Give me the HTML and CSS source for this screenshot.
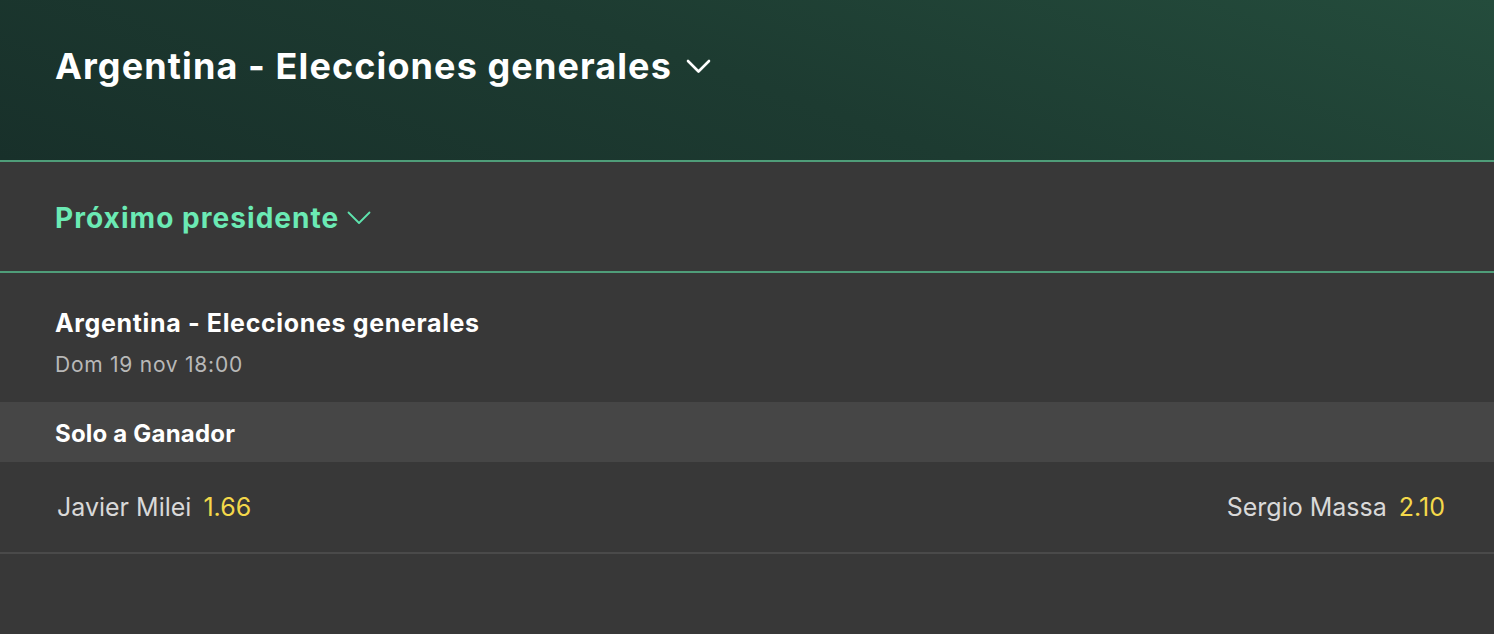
FILE: index.html
```html
<!DOCTYPE html>
<html lang="es">
<head>
<meta charset="utf-8">
<title>Argentina - Elecciones generales</title>
<link rel="stylesheet" href="styles.css">
</head>
<body>
<header class="hero">
  <h1 class="hero-title">Argentina - Elecciones generales
    <svg class="chev" width="25" height="15" viewBox="0 0 25 15"><path d="M2 2 L12.5 12.5 L23 2" fill="none" stroke="#fff" stroke-width="2.6" stroke-linecap="round" stroke-linejoin="round"/></svg>
  </h1>
</header>
<section class="subhead">
  <h2 class="sub-title">Próximo presidente
    <svg class="chev" width="24" height="14" viewBox="0 0 24 14"><path d="M1.5 1.5 L12 12 L22.5 1.5" fill="none" stroke="#5ee3ad" stroke-width="1.8" stroke-linecap="round" stroke-linejoin="round"/></svg>
  </h2>
</section>
<section class="event">
  <div class="event-title">Argentina - Elecciones generales</div>
  <div class="event-date">Dom 19 nov 18:00</div>
</section>
<div class="market">Solo a Ganador</div>
<div class="odds-row">
  <div class="pick"><span class="name">Javier Milei</span><span class="price">1.66</span></div>
  <div class="pick"><span class="name">Sergio Massa</span><span class="price">2.10</span></div>
</div>
</body>
</html>
```

FILE: styles.css
```css
html, body {
  margin: 0;
  padding: 0;
  background: #383838;
  font-family: Inter, "Noto Sans", "Liberation Sans", sans-serif;
  color: #fff;
}
.hero {
  height: 162px;
  box-sizing: border-box;
  background: linear-gradient(200deg, #244c3c 0%, #1d3b31 50%, #18302a 100%);
  border-bottom: 2px solid #4f9d79;
  display: flex;
  align-items: flex-start;
  padding: 44px 0 0 55px;
}
.hero-title {
  margin: 0;
  font-size: 36px;
  font-weight: 700;
  letter-spacing: 1.1px;
  display: flex;
  align-items: center;
  gap: 14px;
  line-height: 44px;
}
.chev { display: block; }
.subhead {
  height: 111px;
  box-sizing: border-box;
  border-bottom: 2px solid #4f9d79;
  padding: 2px 0 0 55px;
  display: flex;
  align-items: center;
}
.sub-title {
  margin: 0;
  font-size: 28px;
  font-weight: 700;
  letter-spacing: 1.05px;
  color: #6beab4;
  display: flex;
  align-items: center;
  gap: 8px;
  line-height: 34px;
}
.event {
  height: 129px;
  box-sizing: border-box;
  padding: 35px 0 0 55px;
}
.event-title {
  font-size: 25px;
  font-weight: 700;
  letter-spacing: 0.65px;
  line-height: 30px;
}
.event-date {
  margin-top: 15px;
  font-size: 21px;
  letter-spacing: 0.75px;
  color: #b8b8b8;
  line-height: 24px;
}
.market {
  height: 60px;
  box-sizing: border-box;
  background: #464646;
  padding: 3px 0 0 55px;
  display: flex;
  align-items: center;
  font-size: 24px;
  font-weight: 700;
  letter-spacing: 0.2px;
}
.odds-row {
  height: 92px;
  box-sizing: border-box;
  border-bottom: 2px solid #4a4a4a;
  padding: 0 49px 0 57px;
  display: flex;
  align-items: center;
  justify-content: space-between;
}
.pick {
  display: flex;
  gap: 12px;
  font-size: 25px;
}
.name { color: #d9d9d9; }
.price { color: #f4d84a; }
```
